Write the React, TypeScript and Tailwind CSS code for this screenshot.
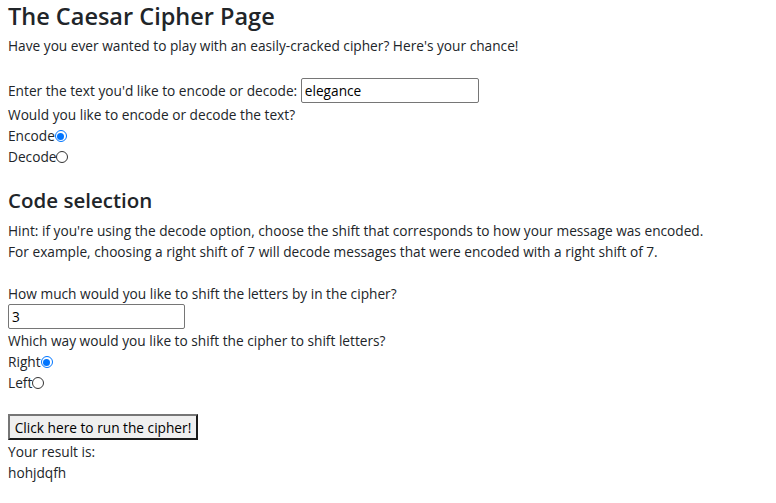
export default function App() {
  return (
    <div className="min-h-screen bg-white px-2 text-[#212529] font-['Open_Sans',sans-serif] text-[13.7px] leading-[21px]">
      <h1 className="h-[35px] text-[23.5px] leading-[32px] font-semibold">The Caesar Cipher Page</h1>
      <p className="h-[21px]">Have you ever wanted to play with an easily-cracked cipher? Here's your chance!</p>
      <div className="h-[21px]" />
      <div className="flex h-[27px] items-center">
        <span>Enter the text you'd like to encode or decode:&nbsp;</span>
        <input
          defaultValue="elegance"
          className="h-[25px] w-[178px] rounded-[2px] border border-[#767676] px-[3px] text-[13.7px] text-black outline-none"
        />
      </div>
      <div className="h-[21px]">Would you like to encode or decode the text?</div>
      <Radio label="Encode" checked />
      <Radio label="Decode" />

      <h2 className="mt-[20px] h-[33px] text-[20.5px] leading-[27px] font-semibold">Code selection</h2>
      <p>
        Hint: if you're using the decode option, choose the shift that corresponds to how your message was encoded.
        <br />
        For example, choosing a right shift of 7 will decode messages that were encoded with a right shift of 7.
      </p>
      <div className="h-[21px]" />
      <div className="h-[21px]">How much would you like to shift the letters by in the cipher?</div>
      <input
        defaultValue="3"
        className="block h-[25px] w-[177px] rounded-[2px] border border-[#767676] px-[3px] text-[13.7px] text-black outline-none"
      />
      <div className="mt-[1px] h-[21px]">Which way would you like to shift the cipher to shift letters?</div>
      <Radio label="Right" checked />
      <Radio label="Left" />
      <div className="h-[21px]" />
      <button className="h-[26px] w-[190px] border-2 border-t-[#767676] border-l-[#767676] border-r-[#1a1a1a] border-b-[#1a1a1a] bg-[#efefef] text-[13.7px] text-black">
        Click here to run the cipher!
      </button>
      <div className="mt-[1px] h-[21px]">Your result is:</div>
      <div className="h-[21px]">hohjdqfh</div>
    </div>
  );
}

function Radio({ label, checked }: { label: string; checked?: boolean }) {
  return (
    <div className="flex h-[21px] items-center">
      <span>{label}</span>
      <span
        className={
          checked
            ? "mt-[1px] h-[12px] w-[12px] rounded-full border-[1.5px] border-[#0075ff] bg-white p-[1.5px]"
            : "mt-[1px] h-[12px] w-[12px] rounded-full border border-[#333]"
        }
      >
        {checked && <span className="block h-full w-full rounded-full bg-[#0075ff]" />}
      </span>
    </div>
  );
}
